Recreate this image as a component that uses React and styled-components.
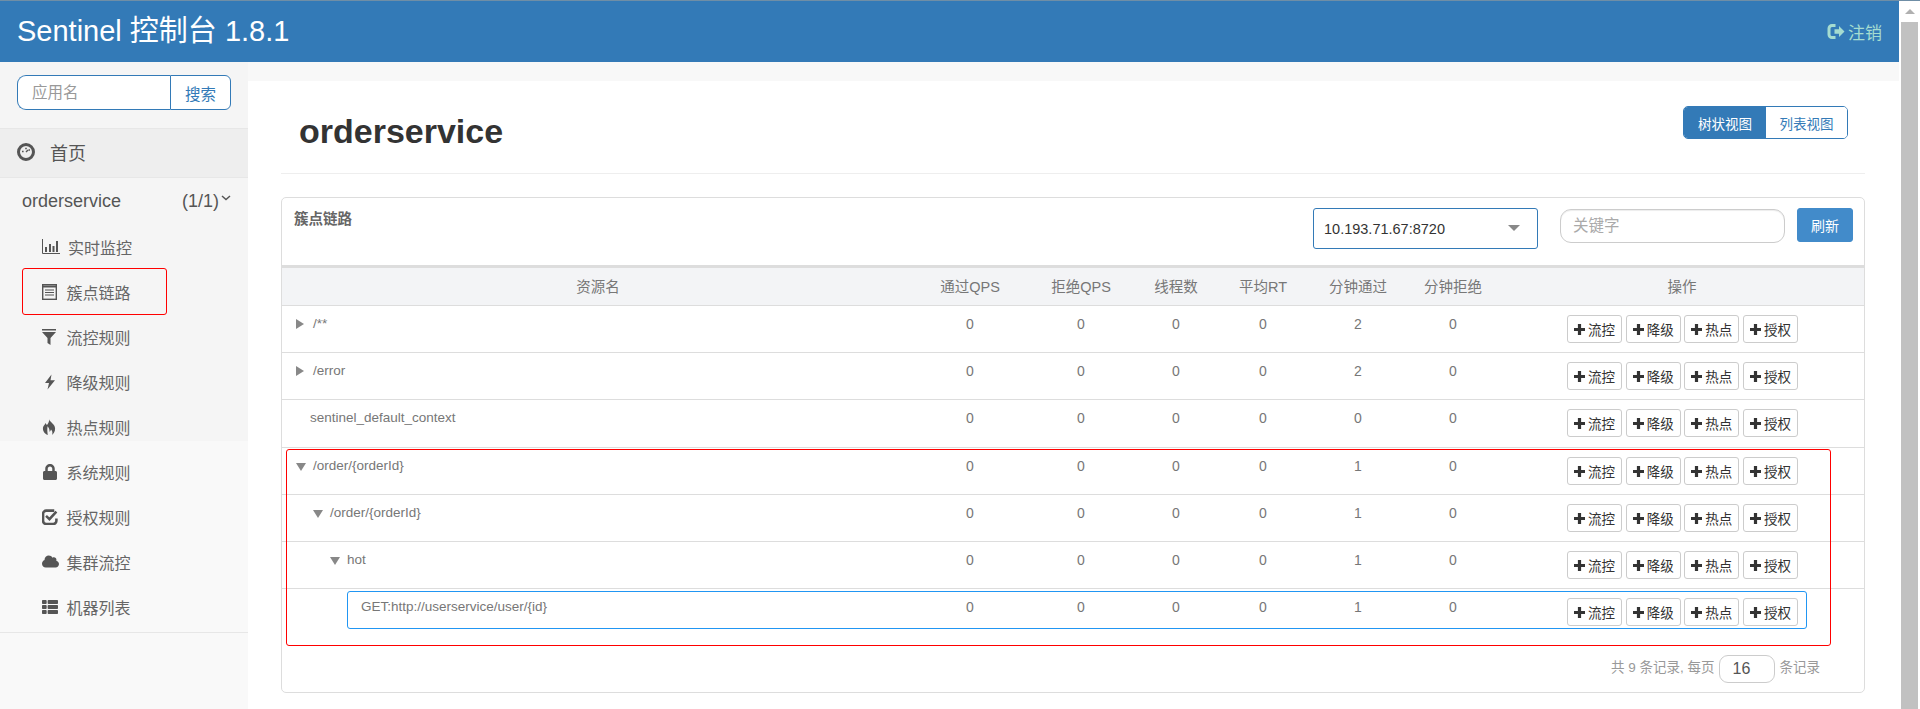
import React from "react";
import styled, { createGlobalStyle } from "styled-components";
import { FaLock, FaCloud, FaThList } from "react-icons/fa";

const Global = createGlobalStyle`
  html, body { margin: 0; padding: 0; background: #fff; overflow: hidden; }
  * { box-sizing: border-box; }
  body { font-family: "Liberation Sans", "Noto Sans CJK SC", sans-serif; font-size: 14px; color: #777; }
`;

const Screen = styled.div`
  width: 1920px;
  height: 709px;
  border-top: 1px solid #6f8ea6;
  display: flex;
  overflow: hidden;
`;
const Page = styled.div`
  flex: 1;
  min-width: 0;
  display: flex;
  flex-direction: column;
`;

/* fake browser scrollbar */
const ScrollBar = styled.div`
  width: 21px;
  padding-left: 2px;
  background: #fff;
  display: flex;
  flex-direction: column;
`;
const ScrollArrow = styled.div`
  height: 21px;
  width: 17px;
  display: flex;
  align-items: center;
  justify-content: center;
  &::before {
    content: "";
    border-left: 5px solid transparent;
    border-right: 5px solid transparent;
    border-bottom: 5px solid #b0b0b0;
  }
`;
const ScrollThumb = styled.div`
  flex: 1;
  width: 17px;
  background: #c1c1c1;
`;

const Navbar = styled.header`
  height: 61px;
  background: #337ab7;
  display: flex;
  align-items: center;
  justify-content: space-between;
  padding: 0 17px;
  flex: none;
`;
const Brand = styled.div`
  font-size: 29px;
  color: #fff;
  margin-top: -7px;
`;
const Logout = styled.a`
  display: flex;
  align-items: center;
  gap: 2px;
  font-size: 17px;
  color: #a5dcd0;
  margin-top: -1px;
`;

const Body = styled.div`
  flex: 1;
  display: flex;
  min-height: 0;
`;
const Sidebar = styled.aside`
  width: 248px;
  flex: none;
  background: linear-gradient(#f5f5f5 0 379px, #f9f9f9 379px);
`;
const SearchForm = styled.form`
  display: flex;
  margin: 13px 17px 18px;
  height: 35px;
`;
const SearchInput = styled.input`
  width: 153px;
  border: 1px solid #337ab7;
  border-right: 0;
  border-radius: 9px 0 0 9px;
  padding: 0 14px;
  font: 15.5px "Liberation Sans", "Noto Sans CJK SC", sans-serif;
  background: #fff;
  outline: none;
  &::placeholder { color: #999; }
`;
const SearchButton = styled.button`
  width: 61px;
  border: 1px solid #337ab7;
  border-radius: 0 6px 6px 0;
  background: #fff;
  color: #337ab7;
  padding: 0;
  font: 15.5px "Liberation Sans", "Noto Sans CJK SC", sans-serif;
`;
const HomeRow = styled.div`
  height: 50px;
  border-top: 1px solid #e7e7e7;
  border-bottom: 1px solid #e7e7e7;
  background: #eee;
  display: flex;
  align-items: center;
  gap: 15px;
  padding: 0 0 3px 17px;
  font-size: 18px;
  color: #555;
`;
const AppRow = styled.div`
  height: 47px;
  display: flex;
  align-items: center;
  padding: 0 17px 0 22px;
  font-size: 18px;
  color: #555;
`;
const AppCount = styled.span`
  margin-left: auto;
`;
const Chevron = styled.svg`
  width: 10px;
  height: 6px;
  margin: 0 0 7px 2px;
`;
const NavList = styled.ul`
  list-style: none;
  margin: 0;
  padding: 0 0 2px;
  border-bottom: 1px solid #e7e7e7;
`;
const NavItem = styled.li`
  position: relative;
  height: 45px;
  display: flex;
  align-items: center;
  padding: 0 0 2px 42px;
  font-size: 16px;
  color: #666;
  ${(p) =>
    p.$marked &&
    `&::after {
      content: "";
      position: absolute;
      left: 22px;
      top: -2px;
      width: 143px;
      height: 45px;
      border: 1px solid #f00;
      border-radius: 3px;
    }`}
`;
const NavIcon = styled.span`
  width: ${(p) => (p.$wide ? 26 : 24.5)}px;
  flex: none;
  display: flex;
  align-items: center;
  color: #555;
`;

const Content = styled.main`
  flex: 1;
  min-width: 0;
  background: #f8f8f8;
  padding-top: 19px;
  display: flex;
`;
const MainCard = styled.div`
  flex: 1;
  background: #fff;
  padding: 0 34px 0 33px;
`;
const PageHead = styled.div`
  height: 93px;
  border-bottom: 1px solid #eee;
  display: flex;
  justify-content: space-between;
  align-items: flex-start;
  padding: 0 17px 0 18px;
`;
const PageTitle = styled.h1`
  margin: 31px 0 0;
  font-size: 34px;
  line-height: 38px;
  font-weight: bold;
  color: #333;
`;
const ViewSwitch = styled.div`
  display: flex;
  margin-top: 25px;
  height: 33px;
  border: 1px solid #337ab7;
  border-radius: 5px;
  overflow: hidden;
`;
const ViewButton = styled.button`
  width: ${(p) => (p.$active ? 82 : 81)}px;
  border: 0;
  padding: 0;
  font: 13.5px "Liberation Sans", "Noto Sans CJK SC", sans-serif;
  background: ${(p) => (p.$active ? "#337ab7" : "#fff")};
  color: ${(p) => (p.$active ? "#fff" : "#337ab7")};
`;

const Panel = styled.section`
  margin-top: 23px;
  border: 1px solid #ddd;
  border-radius: 5px;
`;
const PanelHead = styled.div`
  height: 67px;
  display: flex;
  align-items: flex-start;
  padding: 0 11px 0 12px;
`;
const PanelTitle = styled.div`
  margin-top: 11px;
  font-size: 14.5px;
  line-height: 20px;
  font-weight: bold;
  color: #666;
  margin-right: auto;
`;
const HostSelect = styled.div`
  position: relative;
  width: 225px;
  height: 41px;
  margin-top: 10px;
  border: 1px solid #337ab7;
  border-radius: 3px;
  display: flex;
  align-items: center;
  padding: 0 10px;
  font-size: 14.5px;
  color: #333;
  &::after {
    content: "";
    position: absolute;
    right: 17px;
    top: 16px;
    border-left: 6px solid transparent;
    border-right: 6px solid transparent;
    border-top: 6px solid #888;
  }
`;
const KeywordInput = styled.input`
  width: 225px;
  height: 34px;
  margin: 11px 0 0 22px;
  border: 1px solid #ccc;
  border-radius: 11px;
  box-shadow: inset 0 1px 1px rgba(0, 0, 0, 0.075);
  padding: 0 12px;
  font: 15.5px "Liberation Sans", "Noto Sans CJK SC", sans-serif;
  outline: none;
  &::placeholder { color: #aaa; }
`;
const RefreshButton = styled.button`
  width: 56px;
  height: 34px;
  margin: 10px 0 0 12px;
  border: 1px solid #428bca;
  border-radius: 3px;
  background: #428bca;
  color: #fff;
  padding: 0;
  font: 14px "Liberation Sans", "Noto Sans CJK SC", sans-serif;
`;

const TableWrap = styled.div`
  position: relative;
`;
const Table = styled.table`
  width: 100%;
  table-layout: fixed;
  border-collapse: separate;
  border-spacing: 0;
`;
const HeadCell = styled.th`
  height: 41px;
  padding: 0 0 2px;
  border-top: 3px solid #ddd;
  border-bottom: 1px solid #ddd;
  background: #f3f4f6;
  font-weight: normal;
  font-size: 14.5px;
  color: #777;
  text-align: center;
`;
const Cell = styled.td`
  height: ${(p) => p.$h}px;
  padding: 8px 0 0;
  vertical-align: top;
  line-height: 20px;
  text-align: center;
  font-size: 14px;
  color: #777;
  border-bottom: ${(p) => (p.$last ? "0" : "1px solid #ddd")};
`;
const NameCell = styled(Cell)`
  text-align: left;
  font-size: 13.5px;
  padding-left: ${(p) => 28 + p.$level * 17 - (p.$arrow ? 14 : 0)}px;
`;
const Arrow = styled.span`
  display: inline-block;
  width: 17px;
  vertical-align: -1px;
  &::before {
    content: "";
    display: inline-block;
    ${(p) =>
      p.$open
        ? `border-left: 5px solid transparent;
           border-right: 5px solid transparent;
           border-top: 8px solid #888;`
        : `border-top: 5px solid transparent;
           border-bottom: 5px solid transparent;
           border-left: 8px solid #888;`}
  }
`;
const Actions = styled.div`
  display: flex;
  gap: 3.67px;
  justify-content: flex-start;
  margin: 1px 0 0 67px;
`;
const ActionButton = styled.button`
  width: 55px;
  height: 28px;
  border: 1px solid #ccc;
  border-radius: 3px;
  background: #fff;
  color: #333;
  padding: 0;
  display: flex;
  align-items: center;
  justify-content: center;
  gap: 3px;
  font: 13.5px "Liberation Sans", "Noto Sans CJK SC", sans-serif;
`;
const RedBox = styled.div`
  position: absolute;
  left: 4px;
  top: 184px;
  width: 1545px;
  height: 197px;
  border: 1px solid #f00;
  border-radius: 3px;
  pointer-events: none;
`;
const BlueBox = styled.div`
  position: absolute;
  left: 65px;
  top: 326px;
  width: 1460px;
  height: 38px;
  border: 1px solid #2196f3;
  border-radius: 3px;
  pointer-events: none;
`;
const Pager = styled.div`
  height: 56px;
  display: flex;
  justify-content: flex-end;
  align-items: flex-start;
  padding: 19px 44px 0 0;
  gap: 4px;
  font-size: 13.5px;
  line-height: 26px;
  color: #999;
`;
const PageSize = styled.input`
  width: 56px;
  height: 28px;
  margin-right: 1px;
  border: 1px solid #ccc;
  border-radius: 9px;
  text-align: left;
  padding: 0 13px;
  font: 16px "Liberation Sans", sans-serif;
  color: #555;
  outline: none;
`;

const LogoutIcon = () => (
  <svg width="20" height="17" viewBox="0 0 19 17">
    <path d="M9 2.5H5.5a3 3 0 0 0-3 3v6a3 3 0 0 0 3 3H9" fill="none" stroke="currentColor" strokeWidth="3" />
    <path d="M8 6.2h4.5V3l5.500 5.500-5.500 5.500v-3.200H8z" fill="currentColor" />
  </svg>
);
const DashIcon = () => (
  <svg width="18" height="18" viewBox="0 0 18 18">
    <circle cx="9" cy="9" r="7.5" fill="none" stroke="#555" strokeWidth="3" />
    <path d="M5 8.5h1.6M8.2 5.5h1.6M11.5 7h1.5M9 9l2-2" stroke="#555" strokeWidth="1.4" fill="none" />
  </svg>
);
const StatsIcon = () => (
  <svg width="18" height="15" viewBox="0 0 18 15">
    <path d="M.5 0v14.5H18" fill="none" stroke="currentColor" />
    <path d="M3 8h2v5H3zM7 5h2v8H7zM10.5 7h2v6h-2zM14 2h2v11h-2z" fill="currentColor" />
  </svg>
);
const ListIcon = () => (
  <svg width="15" height="16" viewBox="0 0 15 16">
    <rect x=".7" y=".7" width="13.6" height="14.6" fill="none" stroke="currentColor" strokeWidth="1.4" />
    <path d="M1 2.5h13" stroke="currentColor" strokeWidth="2" />
    <path d="M3 6h9M3 8.5h9M3 11h9" stroke="currentColor" strokeWidth="1.2" />
  </svg>
);
const FilterIcon = () => (
  <svg width="14" height="16" viewBox="0 0 14 16">
    <path d="M0 0h14v1.6H0zM0 3h14L8.5 9v7l-3-2V9z" fill="currentColor" />
  </svg>
);
const FlashIcon = () => (
  <svg width="12" height="16" viewBox="0 0 12 15" style={{ marginLeft: 2 }}>
    <path d="M7.5 0 1 8.5h4L3.5 15 11 5.8H6.5z" fill="currentColor" />
  </svg>
);
const FireIcon = () => (
  <svg width="14" height="16" viewBox="0 0 14 16">
    <path
      d="M7 0c.5 2.500 4 4 5.500 7 1.300 3 .5 6.500-2.500 9 .8-2 .5-4-1-5.500-.3 1.200-1 1.800-1.500 2.300.2-2-.5-4-2-5.500C5.500 9 5 10.500 5.800 16 2.500 14.500.5 12 1 8.500 1.300 6.500 3 6 3.500 4 4 5 4.500 5.500 5 6 6.500 4 7.500 2 7 0z"
      fill="currentColor"
    />
  </svg>
);
const CheckIcon = () => (
  <svg width="16" height="16" viewBox="0 0 15 15">
    <path d="M11.5 1.500H4a3 3 0 0 0-3 3v6.500a3 3 0 0 0 3 3h6.500a3 3 0 0 0 3-3V9" fill="none" stroke="currentColor" strokeWidth="2.4" />
    <path d="m3.800 6.500 3.200 3 6.500-7" fill="none" stroke="currentColor" strokeWidth="2.4" />
  </svg>
);
const PlusIcon = () => (
  <svg width="11" height="11" viewBox="0 0 11 11">
    <path d="M5.5 0v11M0 5.500h11" stroke="#333" strokeWidth="3.2" />
  </svg>
);

const navItems = [
  { label: "实时监控", icon: <StatsIcon />, wide: true },
  { label: "簇点链路", icon: <ListIcon />, marked: true },
  { label: "流控规则", icon: <FilterIcon /> },
  { label: "降级规则", icon: <FlashIcon /> },
  { label: "热点规则", icon: <FireIcon /> },
  { label: "系统规则", icon: <FaLock size={16} /> },
  { label: "授权规则", icon: <CheckIcon /> },
  { label: "集群流控", icon: <FaCloud size={17} /> },
  { label: "机器列表", icon: <FaThList size={16} /> },
];

const columns = [
  ["资源名", 632],
  ["通过QPS", 112],
  ["拒绝QPS", 110],
  ["线程数", 80],
  ["平均RT", 94],
  ["分钟通过", 96],
  ["分钟拒绝", 94],
  ["操作", 364],
];

const rows = [
  { name: "/**", level: 0, arrow: "closed", total: 2, h: 47 },
  { name: "/error", level: 0, arrow: "closed", total: 2, h: 47 },
  { name: "sentinel_default_context", level: 0, total: 0, h: 48 },
  { name: "/order/{orderId}", level: 0, arrow: "open", total: 1, h: 47 },
  { name: "/order/{orderId}", level: 1, arrow: "open", total: 1, h: 47 },
  { name: "hot", level: 2, arrow: "open", total: 1, h: 47 },
  { name: "GET:http://userservice/user/{id}", level: 3, total: 1, h: 47, last: true },
];

const actions = ["流控", "降级", "热点", "授权"];

export default function App() {
  return (
    <>
      <Global />
      <Screen>
        <Page>
          <Navbar>
            <Brand>Sentinel 控制台 1.8.1</Brand>
            <Logout>
              <LogoutIcon />
              注销
            </Logout>
          </Navbar>
          <Body>
            <Sidebar>
              <SearchForm>
                <SearchInput placeholder="应用名" />
                <SearchButton type="button">搜索</SearchButton>
              </SearchForm>
              <HomeRow>
                <DashIcon />
                首页
              </HomeRow>
              <AppRow>
                orderservice
                <AppCount>(1/1)</AppCount>
                <Chevron viewBox="0 0 10 6">
                  <path d="m1 1 4 3.5L9 1" fill="none" stroke="#555" strokeWidth="1.5" />
                </Chevron>
              </AppRow>
              <NavList>
                {navItems.map((item) => (
                  <NavItem key={item.label} $marked={item.marked}>
                    <NavIcon $wide={item.wide}>{item.icon}</NavIcon>
                    {item.label}
                  </NavItem>
                ))}
              </NavList>
            </Sidebar>
            <Content>
              <MainCard>
                <PageHead>
                  <PageTitle>orderservice</PageTitle>
                  <ViewSwitch>
                    <ViewButton $active>树状视图</ViewButton>
                    <ViewButton>列表视图</ViewButton>
                  </ViewSwitch>
                </PageHead>
                <Panel>
                  <PanelHead>
                    <PanelTitle>簇点链路</PanelTitle>
                    <HostSelect>10.193.71.67:8720</HostSelect>
                    <KeywordInput placeholder="关键字" />
                    <RefreshButton type="button">刷新</RefreshButton>
                  </PanelHead>
                  <TableWrap>
                    <Table>
                      <colgroup>
                        {columns.map(([title, width]) => (
                          <col key={title} width={width} />
                        ))}
                      </colgroup>
                      <thead>
                        <tr>
                          {columns.map(([title]) => (
                            <HeadCell key={title}>{title}</HeadCell>
                          ))}
                        </tr>
                      </thead>
                      <tbody>
                        {rows.map((row, i) => (
                          <tr key={i}>
                            <NameCell $h={row.h} $last={row.last} $level={row.level} $arrow={!!row.arrow}>
                              {row.arrow && <Arrow $open={row.arrow === "open"} />}
                              {row.name}
                            </NameCell>
                            {[0, 0, 0, 0, row.total, 0].map((value, j) => (
                              <Cell key={j} $h={row.h} $last={row.last}>
                                {value}
                              </Cell>
                            ))}
                            <Cell $h={row.h} $last={row.last}>
                              <Actions>
                                {actions.map((label) => (
                                  <ActionButton key={label} type="button">
                                    <PlusIcon />
                                    {label}
                                  </ActionButton>
                                ))}
                              </Actions>
                            </Cell>
                          </tr>
                        ))}
                      </tbody>
                    </Table>
                    <RedBox />
                    <BlueBox />
                  </TableWrap>
                  <Pager>
                    共 9 条记录, 每页
                    <PageSize defaultValue="16" />
                    条记录
                  </Pager>
                </Panel>
              </MainCard>
            </Content>
          </Body>
        </Page>
        <ScrollBar>
          <ScrollArrow />
          <ScrollThumb />
        </ScrollBar>
      </Screen>
    </>
  );
}
